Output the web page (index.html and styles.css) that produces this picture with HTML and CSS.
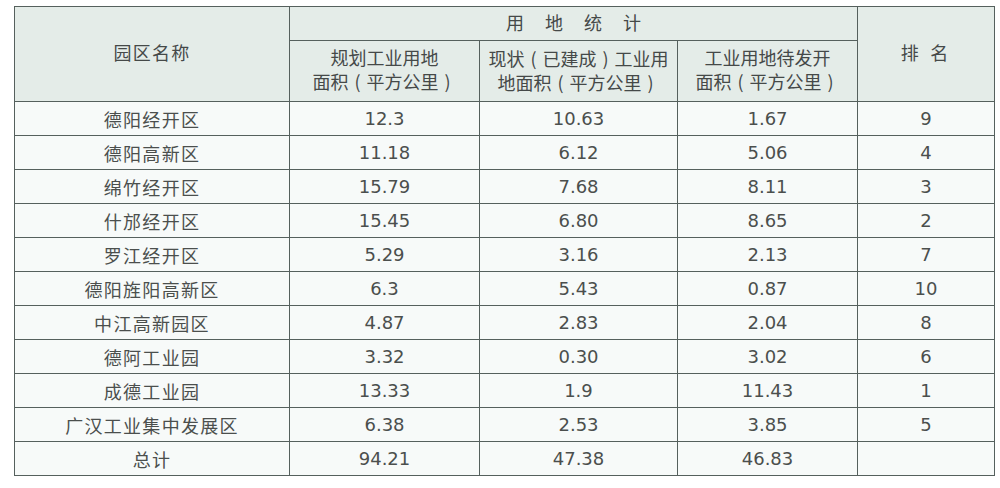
FILE: index.html
```html
<!DOCTYPE html>
<html lang="zh-CN">
<head>
<meta charset="utf-8">
<link rel="stylesheet" href="styles.css">
</head>
<body>
<table class="stats">
  <colgroup>
    <col class="c1"><col class="c2"><col class="c3"><col class="c4"><col class="c5">
  </colgroup>
  <thead>
    <tr class="h1">
      <th rowspan="2" class="zh top">园区名称</th>
      <th colspan="3" class="group">用地统计</th>
      <th rowspan="2" class="rank top">排 名</th>
    </tr>
    <tr class="h2">
      <th>规划工业用地<br>面积<span class="p">(</span>平方公里<span class="p">)</span></th>
      <th>现状<span class="p">(</span>已建成<span class="p">)</span>工业用<br>地面积<span class="p">(</span>平方公里<span class="p">)</span></th>
      <th>工业用地待发开<br>面积<span class="p">(</span>平方公里<span class="p">)</span></th>
    </tr>
  </thead>
  <tbody>
    <tr><td class="zh">德阳经开区</td><td>12.3</td><td>10.63</td><td>1.67</td><td>9</td></tr>
    <tr><td class="zh">德阳高新区</td><td>11.18</td><td>6.12</td><td>5.06</td><td>4</td></tr>
    <tr><td class="zh">绵竹经开区</td><td>15.79</td><td>7.68</td><td>8.11</td><td>3</td></tr>
    <tr><td class="zh">什邡经开区</td><td>15.45</td><td>6.80</td><td>8.65</td><td>2</td></tr>
    <tr><td class="zh">罗江经开区</td><td>5.29</td><td>3.16</td><td>2.13</td><td>7</td></tr>
    <tr><td class="zh">德阳旌阳高新区</td><td>6.3</td><td>5.43</td><td>0.87</td><td>10</td></tr>
    <tr><td class="zh">中江高新园区</td><td>4.87</td><td>2.83</td><td>2.04</td><td>8</td></tr>
    <tr><td class="zh">德阿工业园</td><td>3.32</td><td>0.30</td><td>3.02</td><td>6</td></tr>
    <tr><td class="zh">成德工业园</td><td>13.33</td><td>1.9</td><td>11.43</td><td>1</td></tr>
    <tr><td class="zh">广汉工业集中发展区</td><td>6.38</td><td>2.53</td><td>3.85</td><td>5</td></tr>
    <tr><td class="zh">总计</td><td>94.21</td><td>47.38</td><td>46.83</td><td></td></tr>
  </tbody>
</table>
</body>
</html>
```
FILE: styles.css
```css
html, body {
  margin: 0;
  padding: 0;
  background: #ffffff;
}
body {
  padding: 6px 0 0 14px;
  font-family: "DejaVu Sans", "Noto Sans CJK SC", sans-serif;
  color: #4b4f4d;
}
.stats {
  border-collapse: collapse;
  width: 980px;
  table-layout: fixed;
  font-size: 18px;
  background: #f7faf9;
}
.c1 { width: 275px; }
.c2 { width: 190px; }
.c3 { width: 198px; }
.c4 { width: 180px; }
.c5 { width: 137px; }
.stats th, .stats td {
  border: 1px solid #55605d;
  text-align: center;
  vertical-align: middle;
  padding: 0;
  font-weight: normal;
}
.stats tbody tr:not(:first-child) td {
  border-top-color: #6c7874;
}
.stats thead th {
  background: #e4ece8;
  line-height: 22px;
  color: #454948;
}
.h1 { height: 34px; }
.h2 { height: 61px; }
.stats tbody tr { height: 34px; }
.zh { letter-spacing: 1.3px; }
.p {
  display: inline-block;
  width: 18px;
  text-align: center;
  font-family: "Noto Sans CJK SC", sans-serif;
}
.group { letter-spacing: 21px; text-indent: 21px; }
.rank { letter-spacing: 3px; }
.top { padding-bottom: 8px; }
```
